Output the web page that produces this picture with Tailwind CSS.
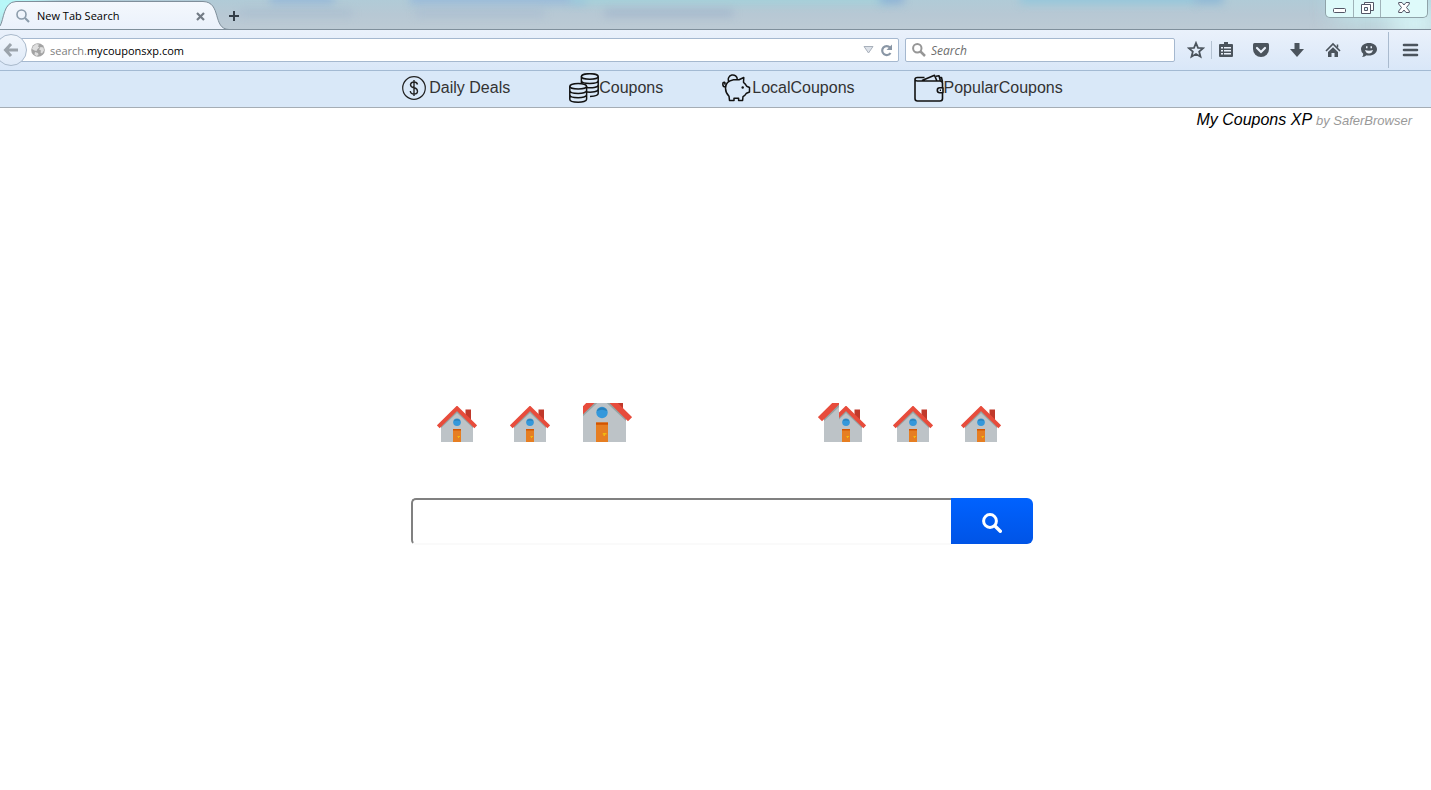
<!DOCTYPE html>
<html lang="en">
<head>
  <meta charset="UTF-8">
  <meta name="viewport" content="width=device-width, initial-scale=1.0">
  <title>New Tab Search</title>
  <script src="https://cdn.jsdelivr.net/npm/@tailwindcss/browser@4"></script>
</head>
<body class="bg-white min-h-screen font-['Liberation_Sans',Arial,sans-serif]">

  <!-- shared house drawing -->
  <svg class="hidden">
    <symbol id="house" viewBox="0 0 40 36">
      <path d="M28.5 3.500h5.500v11l-5.500-5z" fill="#c0392b"/>
      <path d="M4 19 20 4l16 15v17H4z" fill="#bdc3c7"/>
      <path d="M4 18 20 3l16 15v4L20 7 4 22z" fill="#95a5a5"/>
      <path d="M1.300 20.800 20 2.300l18.700 18.500" fill="none" stroke="#e74c3c" stroke-width="3.900"/>
      <circle cx="20" cy="16.300" r="3.800" fill="#3498db"/>
      <path d="M16.500 15.500a3.700 3.700 0 0 1 7 0q-3.500-2-7 0z" fill="#2980b9"/>
      <path d="M16 23h8v13h-8z" fill="#e67e22"/>
      <path d="M16 23h8v1.500h-8z" fill="#d35400"/>
      <path d="M20.500 30h2.500v1h-1v1h-1v-1h-.5z" fill="#f1b90f"/>
    </symbol>
  </svg>

  <div class="font-['Open_Sans','Noto_Sans',sans-serif] text-xs text-black">
    <!-- tab strip -->
    <div class="relative flex h-[30px] items-start overflow-hidden border-b border-[#7f8f9b] bg-linear-to-b from-[#b0cbd7] via-[#b7c8d4] to-[#bccad4]">
      <div class="absolute inset-0 overflow-hidden" aria-hidden="true">
        <div class="absolute -left-8 -top-4 h-10 w-20 rounded-full bg-[#b8fbfb] blur-md"></div>
        <div class="absolute left-[270px] -top-2 h-3 w-16 bg-[#8fb2d8]/70 blur-xs"></div>
        <div class="absolute left-[410px] -top-2 h-3 w-44 bg-[#90b4dc]/70 blur-xs"></div>
        <div class="absolute left-[570px] -top-2 h-3 w-80 bg-[#9fd3db]/70 blur-xs"></div>
        <div class="absolute left-[880px] -top-2 h-3 w-6 bg-[#86acd6]/80 blur-xs"></div>
        <div class="absolute left-[1020px] -top-2 h-3 w-44 bg-[#8ec6dc]/80 blur-xs"></div>
        <div class="absolute left-[1195px] -top-2 h-3 w-7 bg-[#86b4d6]/80 blur-xs"></div>
        <div class="absolute left-[240px] top-[11px] h-1 w-28 bg-[#a4b9cd] blur-xs"></div>
        <div class="absolute left-[416px] top-[11px] h-1 w-32 bg-[#a4b9d0] blur-xs"></div>
        <div class="absolute left-[605px] top-[11px] h-1 w-32 bg-[#98adc8] blur-xs"></div>
        <div class="absolute right-0 -top-4 h-10 w-24 bg-[#c5f4f4]/60 blur-md"></div>
        <div class="absolute -right-2 top-3 h-6 w-12 bg-[#dcfafb] blur-md"></div>
      </div>

      <div class="relative flex h-[30px] w-[229px] shrink-0 items-center pl-4 pr-6 pt-0.5">
        <svg class="absolute left-0 top-0" width="229" height="30" viewBox="0 0 229 30">
          <defs>
            <linearGradient id="tab" x2="0" y2="1"><stop stop-color="#f4f8fd"/><stop offset="1" stop-color="#eaf1fb"/></linearGradient>
          </defs>
          <path d="M0 26C4 20 3 2 16 1.500H203C222 2 212 29 229 29.500V30H0z" fill="url(#tab)"/>
          <path d="M0 26C4 20 3 2 16 1.500H203C222 2 212 29 229 29.500" fill="none" stroke="#7f8f9b"/>
        </svg>
        <svg class="relative" width="14" height="14" viewBox="0 0 14 14" fill="none" stroke="#8b9cab"><circle cx="5.500" cy="5.500" r="4.500" stroke-width="1.600"/><path d="m9 9 4 4" stroke-width="2.200"/></svg>
        <span class="relative ml-[7px] text-[11px] leading-4">New Tab Search</span>
        <button class="relative ml-auto" aria-label="Close tab">
          <svg width="9" height="9" viewBox="0 0 9 9" stroke="#727b85" stroke-width="2.200"><path d="m1 1 7 7M8 1 1 8"/></svg>
        </button>
      </div>
      <button class="relative mt-[11px]" aria-label="New tab">
        <svg width="10" height="10" viewBox="0 0 10 10" stroke="#333e48" stroke-width="2"><path d="M5 0v10M0 5h10"/></svg>
      </button>

      <div class="relative ml-auto mr-[3px] flex h-[18px] overflow-hidden rounded-b-[5px] border border-t-0 border-[#8fa3a9] bg-[#defafa]">
        <button class="flex w-7 items-center justify-center border-r border-[#9fb2b8] pt-1" aria-label="Minimize">
          <svg width="13" height="6" viewBox="0 0 13 6"><rect x=".5" y=".5" width="12" height="4" rx="1" fill="#fff" stroke="#535666"/></svg>
        </button>
        <button class="flex w-[27px] items-center justify-center border-r border-[#9fb2b8] pb-0.5" aria-label="Restore">
          <svg width="13" height="12" viewBox="0 0 13 12" fill="#fff" stroke="#535666"><path d="M3.500.5h9v8h-9z"/><path d="M.5 2.500h9v9h-9z"/><path d="M3.500 5.500h3v3h-3z" fill="#def6f8"/></svg>
        </button>
        <button class="flex w-[46px] items-center justify-center pb-0.5" aria-label="Close">
          <svg width="12" height="11" viewBox="0 0 12 11" fill="#fff" stroke="#535666"><path d="M.7.500h3.300L6 3 8 .500h3.300v1.500L8.500 5.500l2.800 3.500v1.500H8L6 8l-2 2.500H.7V9l2.800-3.500L.7 2z"/></svg>
        </button>
      </div>
    </div>

    <!-- navigation toolbar -->
    <div class="flex h-[41px] items-center overflow-hidden border-b border-[#a3bad3] bg-linear-to-b from-[#eaf1fb] to-[#d9e7f8]">
      <button class="relative z-10 -ml-[5px] flex size-8 shrink-0 items-center justify-center rounded-full border border-[#a9b9cb] bg-linear-to-b from-[#f1f6fc] to-[#dfeaf8]" aria-label="Back">
        <svg width="16" height="14" viewBox="0 0 16 14" fill="none" stroke="#9ba3ab" stroke-width="3"><path d="M8 1 2.500 7 8 13M3 7h12"/></svg>
      </button>
      <div class="-ml-2 flex h-6 min-w-0 flex-1 items-center rounded-[2px] border border-[#a5b8cf] bg-white pl-[11px] pr-[5px]">
        <svg class="shrink-0" width="14" height="14" viewBox="0 0 14 14"><circle cx="7" cy="7" r="6.800" fill="#a3a3a3"/><path d="M2 3.500 5 1l3 .5-1 2 1.500 1-2 1.500-1 2-2-.5L1 6zM9.500 4l3 .5.500 3-2 3-1.500-1 .5-2-2-1zM4 9l3 1 .5 2-2 1-2-1.500z" fill="#dedede"/></svg>
        <div class="ml-[5px] flex-1 whitespace-nowrap pt-0.5 text-[11px] leading-4 text-[#808080]">search.<span class="text-black">mycouponsxp.com</span></div>
        <svg class="mr-[6px] shrink-0" width="11" height="8" viewBox="0 0 11 8"><path d="M1 .5h9L5.500 7z" fill="#dde2e9" stroke="#a8b0bb"/></svg>
        <button aria-label="Reload">
          <svg width="13" height="13" viewBox="0 0 13 13"><path d="M10 3.500A4.500 4.500 0 1 0 10.500 9" fill="none" stroke="#8996a5" stroke-width="2.200"/><path d="M12 .5V6H6.500z" fill="#8996a5"/></svg>
        </button>
      </div>
      <label class="ml-[6px] flex h-6 w-[270px] shrink-0 items-center rounded-[2px] border border-[#a5b8cf] bg-white pl-[6px]">
        <svg class="shrink-0" width="14" height="14" viewBox="0 0 14 14" fill="none" stroke="#969696"><circle cx="5.300" cy="5.300" r="4.200" stroke-width="2"/><path d="m8.500 8.500 4.500 4.500" stroke-width="2.500"/></svg>
        <input type="text" placeholder="Search" aria-label="Search" class="ml-[5px] w-full bg-transparent pt-0.5 leading-4 italic outline-none placeholder:text-[#6d6d6d]">
      </label>

      <div class="flex h-full shrink-0 items-center text-[#4b545d]">
        <button class="ml-3 w-[18px]" aria-label="Bookmark">
          <svg width="18" height="18" viewBox="0 0 18 18" fill="none" stroke="currentColor" stroke-width="1.800"><path d="m9 2 2 4.800 5.200.4-4 3.400 1.300 5.100L9 13l-4.500 2.700 1.300-5.100-4-3.400L7 6.800z"/></svg>
        </button>
        <div class="ml-[6px] h-[18px] w-px bg-[#b4c2d2]"></div>
        <button class="ml-[6px] w-4" aria-label="Bookmarks list">
          <svg width="16" height="16" viewBox="0 0 16 16"><path d="M6 0h4v2h4q1 0 1 1v11q0 1-1 1H2q-1 0-1-1V3q0-1 1-1h4z" fill="currentColor"/><path d="M3 5h2v1.500H3zm3 0h7v1.500H6zM3 8h2v1.500H3zm3 0h7v1.500H6zM3 11h2v1.500H3zm3 0h7v1.500H6z" fill="#eaf1fb"/></svg>
        </button>
        <button class="ml-[18px] w-[18px]" aria-label="Pocket">
          <svg width="18" height="16" viewBox="0 0 18 16"><path d="M2.500 1h13Q17 1 17 2.500V7a8 8 0 0 1-16 0V2.500Q1 1 2.500 1z" fill="currentColor"/><path d="m5 6 4 4 4-4" fill="none" stroke="#eaf1fb" stroke-width="2.200" stroke-linecap="round"/></svg>
        </button>
        <button class="ml-[19px] w-4" aria-label="Downloads">
          <svg width="16" height="16" viewBox="0 0 16 16" fill="currentColor"><path d="M5.500 1h5v6H15l-7 8-7-8h4.500z"/></svg>
        </button>
        <button class="ml-5 w-4" aria-label="Home">
          <svg width="16" height="16" viewBox="0 0 16 16" fill="none" stroke="currentColor"><path d="m1 9 7-7 7 7" stroke-width="1.600"/><path d="M3 10 8 5.200l5 4.800v5H9.500v-4h-3v4H3z" fill="currentColor" stroke="none"/><path d="M12.500 2.500v3" stroke-width="1.500"/></svg>
        </button>
        <button class="ml-5 w-4" aria-label="Chat">
          <svg width="16" height="16" viewBox="0 0 16 16"><path d="M8 1c4.500 0 8 2.500 8 6.200S12.500 13.500 8 13.500c-1 0-2 0-2.500-.3Q4 15 1 15q1.500-1.500 1.200-3.300A6 6 0 0 1 0 7.200C0 3.500 3.500 1 8 1z" fill="currentColor"/><path d="M4 8q4 1.500 8 0-1 3.500-4 3.500T4 8zM5 4.300h1.500v2H5zm4.500 0H11v2H9.500z" fill="#eaf1fb"/></svg>
        </button>
        <div class="ml-[11px] h-9 w-px bg-[#a9bace]"></div>
        <button class="ml-[13px] mr-3 w-[17px]" aria-label="Menu">
          <svg width="17" height="14" viewBox="0 0 17 14" stroke="currentColor" stroke-width="2.600" stroke-linecap="round"><path d="M2 2h13M2 7h13M2 12h13"/></svg>
        </button>
      </div>
    </div>
  </div>

  <!-- coupon links -->
  <nav class="flex h-[37px] items-center justify-center gap-[59px] border-b border-[#a5adb5] bg-[#d9e8f8] pl-[34px] pb-0.5 text-base text-[#333]">
    <a href="#" class="flex items-center gap-[3px]">
      <svg width="24" height="24" viewBox="0 0 24 24" fill="none" stroke="#222"><circle cx="12" cy="12" r="11.300" stroke-width="1.200"/><path d="M15.500 8.500q-.5-2.500-3.500-2.500T8.500 8.700q0 2.300 3.500 3.100t3.500 3.400Q15.500 18 12 18t-3.700-3M12 4v16" stroke-width="1.400"/></svg>
      Daily Deals
    </a>
    <a href="#" class="flex items-center">
      <svg width="30" height="30" viewBox="0 0 30 30" fill="none" stroke="#111" stroke-width="1.500"><ellipse cx="20.800" cy="3.500" rx="8.400" ry="2.800"/><path d="M12.400 3.500V10M29.200 3.500v17q0 2.500-8.200 3M12.400 7.500c0 4 16.800 4 16.800 0M17.500 14.500c5 .8 11.700 0 11.700-2.500M18 19c5 .5 11.200-.3 11.200-2.700"/><ellipse cx="9.200" cy="13.300" rx="8.400" ry="2.800"/><path d="M.8 13.300v12.900c0 4 16.800 4 16.800 0V13.300M.8 17.500c0 4 16.800 4 16.800 0M.8 21.800c0 4 16.800 4 16.800 0"/></svg>
      Coupons
    </a>
    <a href="#" class="flex items-center gap-px">
      <svg width="29" height="28" viewBox="0 0 29 28" fill="none" stroke="#111" stroke-width="1.500" stroke-linejoin="round"><path d="M14.500 5.800H17l4.800-2.300-.3 4.800q2.200 1.600 3.200 4l2.800 1.200v4.500l-3 1.200q-1.400 2.300-3.500 3.500l-.4 3.800h-4v-2.300H12v2.300H7.500L7 22.200q-3.500-3.500-3.500-8 0-7 8-8.400zM6.800 7.500a4.500 4.500 0 1 1 8.500-2M3.600 13Q.8 13 .8 10.200.8 8 2.600 8.300q1.200.8-.3 2"/><circle cx="20.700" cy="13.500" r="1.200" fill="#111" stroke="none"/></svg>
      LocalCoupons
    </a>
    <a href="#" class="flex items-center">
      <svg width="30" height="28" viewBox="0 0 30 28" fill="none" stroke="#111" stroke-width="1.600" stroke-linejoin="round"><path d="M28.500 14V9.500Q28.500 7 26 7H3.500Q1 7 1 5.300T3.500 3.500h7M1 5v19.500Q1 27 3.500 27H26q2.500 0 2.500-2.500V19M8 6.500 20.500 1.300l2.200 5.200M22 2.300l3-.5 1.300 4.700M25.500 3.500h2L28.500 8M29 13.800h-3.200a2.500 2.500 0 0 0 0 5H29z"/><path d="M25.800 16.300h1.200"/></svg>
      PopularCoupons
    </a>
  </nav>

  <div class="pr-[19px] text-right text-base leading-6 italic text-black">
    My Coupons XP <span class="text-[13px] text-[#999]">by SaferBrowser</span>
  </div>

  <main class="mx-auto mt-[270px] w-[622px] max-w-full translate-x-[6px]">
    <div class="flex h-[40px] items-end pb-px pl-[26px]">
      <svg class="shrink-0" width="40" height="36"><use href="#house" width="40" height="36"/></svg>
      <svg class="ml-[33px] shrink-0" width="40" height="36"><use href="#house" width="40" height="36"/></svg>
      <svg class="ml-[33px] shrink-0" width="49" height="39"><use href="#house" x="-11" y="-15" width="60" height="54"/></svg>
      <svg class="ml-[186px] shrink-0" width="48" height="39">
        <svg width="21" height="39"><use href="#house" width="60" height="54" y="-15"/></svg>
        <svg x="21" width="27" height="39"><use href="#house" x="-13" y="3" width="40" height="36"/></svg>
      </svg>
      <svg class="ml-[27px] shrink-0" width="40" height="36"><use href="#house" width="40" height="36"/></svg>
      <svg class="ml-[28px] shrink-0" width="40" height="36"><use href="#house" width="40" height="36"/></svg>
    </div>

    <form class="mt-[55px] flex items-start">
      <input type="text" aria-label="Search the web" class="h-[47px] min-w-0 flex-1 rounded-l-[5px] border-t-2 border-b-2 border-l-2 border-t-[#808080] border-b-[#fafafa] border-l-[#808080] bg-white px-3 text-lg outline-none">
      <button type="button" aria-label="Search" class="flex h-[46px] w-[82px] items-center justify-center rounded-r-md bg-linear-to-b from-[#0062ff] to-[#0054e6] pt-1">
        <svg width="20" height="20" viewBox="0 0 20 20" fill="none" stroke="#fff" stroke-linecap="round"><circle cx="8" cy="8" r="6.400" stroke-width="3"/><path d="m13 13 5.300 5.300" stroke-width="3.400"/></svg>
      </button>
    </form>
  </main>

</body>
</html>
